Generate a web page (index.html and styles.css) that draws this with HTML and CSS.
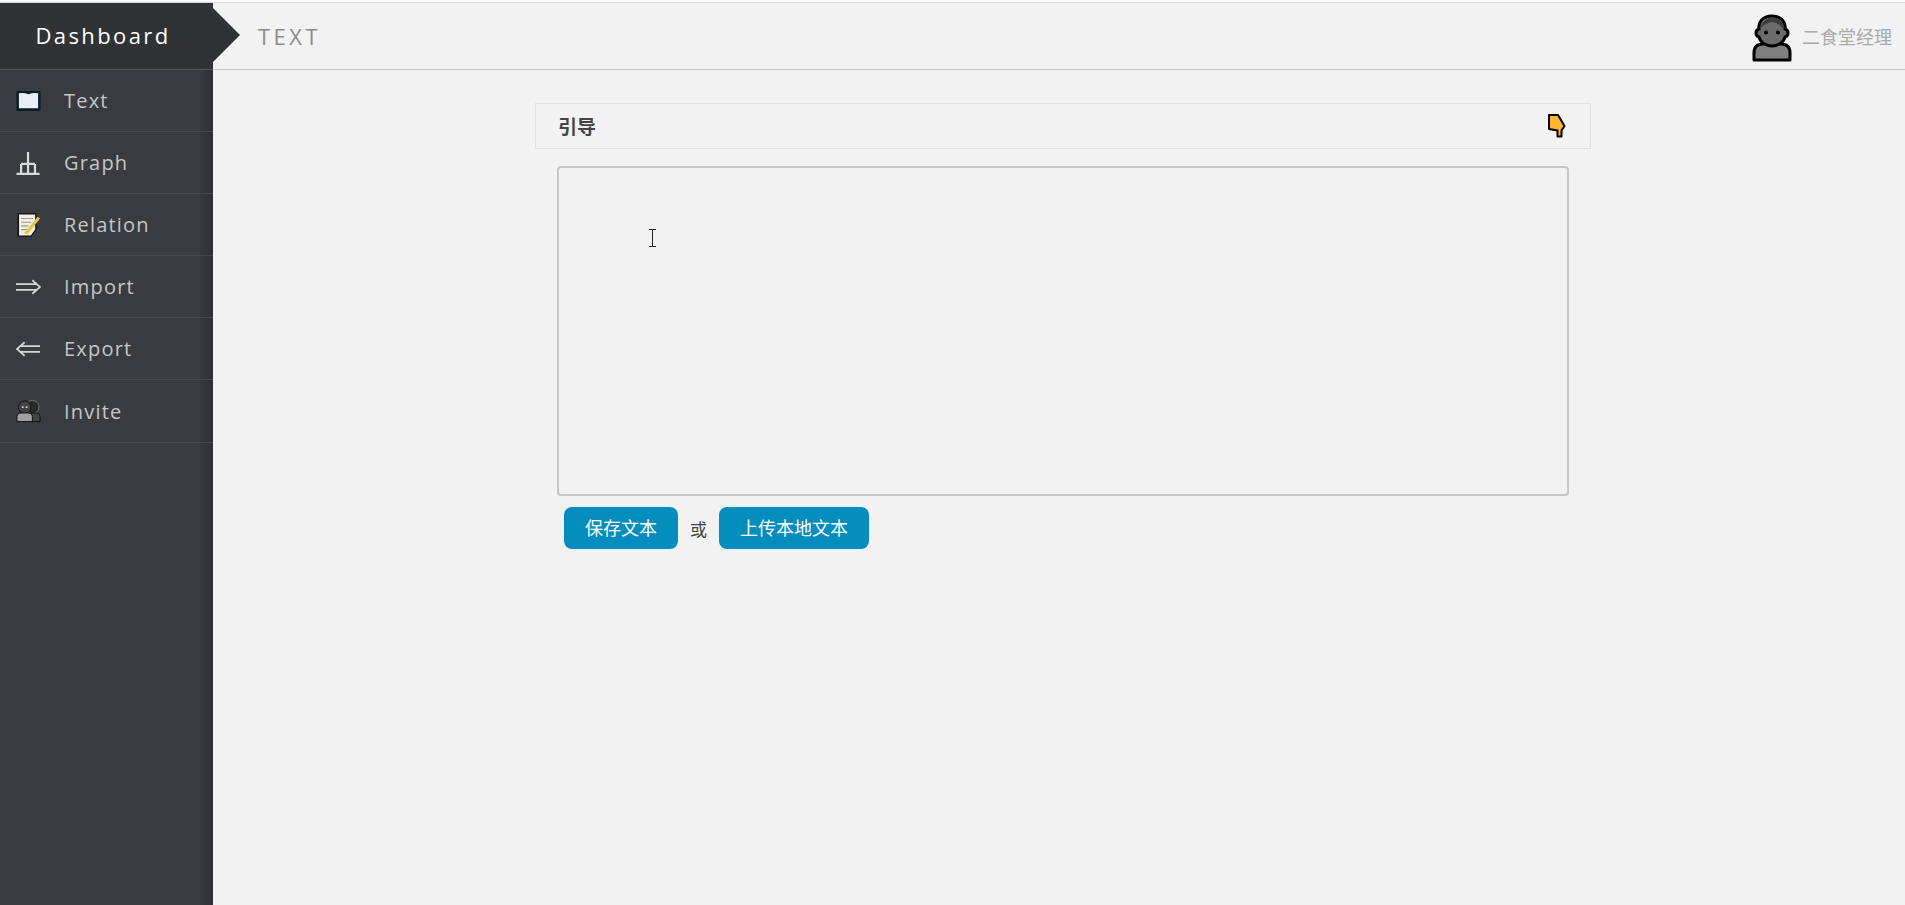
FILE: index.html
```html
<!DOCTYPE html>
<html lang="zh">
  <head>
    <meta charset="utf-8">
    <title>Dashboard</title>
    <link rel="stylesheet" href="styles.css">
  </head>
  <body>
    <div class="layout">
      <aside class="sidebar">
        <div class="brand">Dashboard</div>
        <nav>
          <a class="nav-item" href="#">
            <svg class="nav-icon" viewBox="0 0 26 22"><rect x=".5" y=".5" width="25" height="21" rx="1" fill="#0d1a2a"/><path d="M3 3q5-1 10 1 5-2 10-1v15.500H3z" fill="#e8eef5"/></svg>
            <span>Text</span>
          </a>
          <a class="nav-item" href="#">
            <svg class="nav-icon" viewBox="0 0 26 26" fill="none" stroke="#d8dadc" stroke-width="2.400"><path d="M12.500 1v13M5 14h15M5 14v10M20 14v10M12.500 14v10M0 24.800h25"/></svg>
            <span>Graph</span>
          </a>
          <a class="nav-item" href="#">
            <svg class="nav-icon" viewBox="0 0 26 26"><path d="M2 1h19v17l-5 7H2z" fill="#f3efe2" stroke="#111" stroke-width="1.500"/><path d="M5 6h13M5 10h11M5 14h8M5 18h6" stroke="#999" stroke-width="1.200"/><path d="M8 22L23 4l2.500 2L12 23z" fill="#eec24a"/></svg>
            <span>Relation</span>
          </a>
          <a class="nav-item" href="#">
            <svg class="nav-icon" viewBox="0 0 26 16" fill="none" stroke="#d4d6d8" stroke-width="1.800"><path d="M0 5h21M0 11h21M17 1l8 7-8 7"/></svg>
            <span>Import</span>
          </a>
          <a class="nav-item" href="#">
            <svg class="nav-icon" viewBox="0 0 26 16" fill="none" stroke="#d4d6d8" stroke-width="1.800"><path d="M25 5H5M25 11H5M9 1L1 8l8 7"/></svg>
            <span>Export</span>
          </a>
          <a class="nav-item" href="#">
            <svg class="nav-icon" viewBox="0 0 26 24"><circle cx="17" cy="8" r="7" fill="#2a2a2a" stroke="#777"/><path d="M13 23v-5q0-4 5-4h2q5 0 5 4v5z" fill="#444" stroke="#111"/><circle cx="9" cy="8" r="6.500" fill="#444" stroke="#111"/><circle cx="7" cy="8" r="1" fill="#ddd"/><circle cx="11" cy="8" r="1" fill="#ddd"/><path d="M1 23v-5q0-4 5-4h6q5 0 5 4v5z" fill="#a0a0a0" stroke="#111"/></svg>
            <span>Invite</span>
          </a>
        </nav>
      </aside>
      <main class="main">
        <header class="topbar">
          <div class="page-title">TEXT</div>
          <div class="user">
            <svg class="avatar" viewBox="0 0 40 48"><path d="M2 46v-7q0-9 9-9h18q9 0 9 9v7z" fill="#808080" stroke="#000" stroke-width="3" stroke-linejoin="round"/><path d="M20 2C10 2 6 9 7 15c-4 1-4 7 0 8 1 5 7 9 13 9s12-4 13-9c4-1 4-7 0-8 1-6-3-13-13-13z" fill="#6b6b6b" stroke="#000" stroke-width="3"/><path d="M8 15C10 7 16 3.500 21 3.500c7 0 10.500 5 10.500 11.500-4-5-9-7-11.500-7-3 0-9 3-12 7z" fill="#3c3c3c"/><circle cx="14" cy="18.500" r="2" fill="#000"/><circle cx="26" cy="18.500" r="2" fill="#000"/></svg>
            <span class="user-name">二食堂经理</span>
          </div>
        </header>
        <section class="content">
          <div class="guide-bar">
            <span class="guide-title">引导</span>
            <svg class="hand" viewBox="0 0 18 24"><path d="M1 1h9l6.500 11-3 4.500v6h-4v-6L1 15z" fill="#fbb62e" stroke="#000" stroke-width="2" stroke-linejoin="round"/></svg>
          </div>
          <div class="editor">
            <textarea class="text-input"></textarea>
            <svg class="ibeam" viewBox="0 0 9 18" fill="none" stroke="#222" stroke-width="1"><path d="M1 .500h7M4.500 .500v17M1 17.500h7"/></svg>
          </div>
          <div class="actions">
            <button class="btn">保存文本</button>
            <span class="or">或</span>
            <button class="btn btn-wide">上传本地文本</button>
          </div>
        </section>
      </main>
    </div>
  </body>
</html>
```

FILE: styles.css
```css
html, body {
  margin: 0;
  height: 100%;
  overflow: hidden;
}
body {
  background: #fafafa;
  font-family: "Open Sans", "Noto Sans CJK SC", sans-serif;
  padding-top: 2px;
  box-sizing: border-box;
}
.layout {
  display: flex;
  height: 100%;
  box-sizing: border-box;
  background: #f2f2f2;
  border-top: 1px solid #d8d8d8;
}
.sidebar {
  width: 213px;
  flex: none;
  background: linear-gradient(to right, #393b41 0, #393b41 200px, #2e2f33 213px);
}
.brand {
  position: relative;
  height: 67px;
  box-sizing: border-box;
  line-height: 65px;
  padding-right: 7px;
  text-align: center;
  color: #fff;
  font-size: 22px;
  letter-spacing: 2.400px;
  background: #303236;
  border-bottom: 1px solid #55585c;
}
.brand::after {
  content: "";
  position: absolute;
  left: 213px;
  top: 5px;
  border-left: 27px solid #303236;
  border-top: 27px solid transparent;
  border-bottom: 27px solid transparent;
}
.nav-item {
  display: flex;
  align-items: center;
  height: 62.100px;
  box-sizing: border-box;
  padding-left: 16px;
  gap: 23px;
  color: #c4c6c8;
  font-size: 20px;
  letter-spacing: 1.200px;
  text-decoration: none;
  border-bottom: 1px solid #46484e;
}
.nav-icon {
  width: 25px;
  height: 24px;
  flex: none;
}
.main {
  flex: 1;
  min-width: 0;
}
.topbar {
  display: flex;
  align-items: center;
  justify-content: space-between;
  height: 67px;
  box-sizing: border-box;
  border-bottom: 1px solid #c8c8c8;
  padding: 0 13px 0 45px;
}
.page-title {
  color: #8c8c8c;
  font-size: 22px;
  letter-spacing: 3.500px;
}
.user {
  display: flex;
  align-items: center;
  gap: 10px;
}
.avatar {
  width: 40px;
  height: 48px;
  margin-top: 4px;
}
.user-name {
  color: #aaa;
  font-size: 18px;
}
.content {
  padding: 33px 314px 0 322px;
}
.guide-bar {
  display: flex;
  align-items: center;
  justify-content: space-between;
  height: 46px;
  box-sizing: border-box;
  padding: 0 24px 0 22px;
  border: 1px solid #e2e2e2;
}
.guide-title {
  font-size: 19px;
  font-weight: 700;
  color: #444;
}
.hand {
  width: 18px;
  height: 24px;
}
.editor {
  position: relative;
  margin: 17px 22px 0 22px;
}
.text-input {
  display: block;
  width: 100%;
  height: 330px;
  box-sizing: border-box;
  background: transparent;
  border: 2px solid #c6c6c6;
  border-radius: 4px;
  resize: none;
}
.ibeam {
  position: absolute;
  left: 91px;
  top: 63px;
  width: 9px;
  height: 18px;
}
.actions {
  display: flex;
  align-items: center;
  margin: 11px 0 0 29px;
}
.btn {
  height: 42px;
  width: 114px;
  padding: 0 0 2px;
  border: 0;
  border-radius: 8px;
  background: #058dbd;
  color: #fff;
  font-family: inherit;
  font-size: 18px;
}
.btn-wide {
  width: 150px;
}
.or {
  width: 41px;
  text-align: center;
  font-size: 17px;
  color: #444;
}
```
